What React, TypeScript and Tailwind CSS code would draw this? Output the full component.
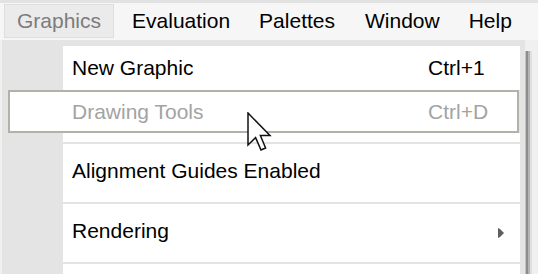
import React from "react";

const MenuBarItem: React.FC<{ label: string; className?: string }> = ({ label, className = "" }) => (
  <div className={`h-[34px] flex items-center text-black ${className}`}>{label}</div>
);

const Separator: React.FC = () => <div className="ml-[61px] w-[457px] h-[2px] bg-[#e3e3e3]" />;

const Cursor: React.FC = () => (
  <svg
    className="absolute left-[247px] top-[112px]"
    width="26"
    height="40"
    viewBox="0 0 13 20"
  >
    <path
      d="M0.5 0.5 L0.5 16.5 L4.3 12.8 L7 19 L9.3 18 L6.7 11.8 L11.5 11.8 Z"
      fill="#ffffff"
      stroke="#111111"
      strokeWidth="0.75"
      strokeLinejoin="miter"
    />
  </svg>
);

const App: React.FC = () => {
  return (
    <div className="relative w-[538px] h-[274px] overflow-hidden bg-[#f0f0f0] font-['Liberation_Sans',Arial,sans-serif] text-[21px] leading-[24px]">
      {/* Top strip */}
      <div className="h-[3px] bg-[#e2e2e2]" />

      {/* Menu bar */}
      <div className="h-[37px] bg-[#f6f6f6] flex items-start">
        <MenuBarItem
          label="Graphics"
          className="ml-[4px] mt-[1px] px-[12px] bg-[#ebebeb] border border-[#dedede] !text-[#7c7c7c]"
        />
        <MenuBarItem label="Evaluation" className="ml-[18px] mt-[1px]" />
        <MenuBarItem label="Palettes" className="ml-[29px] mt-[1px]" />
        <MenuBarItem label="Window" className="ml-[30px] mt-[1px]" />
        <MenuBarItem label="Help" className="ml-[29px] mt-[1px]" />
      </div>

      {/* Dropdown */}
      <div className="flex ml-[2px]">
        <div className="w-[523px] h-[234px] bg-[#e4e4e4] pt-[6px] pr-[5px] flex flex-col">
          {/* New Graphic */}
          <div className="ml-[61px] w-[457px] h-[44px] bg-white flex items-center pl-[9px] pb-[1px] text-black">
            <span className="w-[356px]">New Graphic</span>
            <span>Ctrl+1</span>
          </div>

          {/* Drawing Tools (hovered, disabled) */}
          <div className="ml-[6px] w-[511px] h-[43px] bg-white border-2 border-[#b2b2aa] flex items-center pl-[62px] text-[#a3a3a3]">
            <span className="w-[356px]">Drawing Tools</span>
            <span>Ctrl+D</span>
          </div>

          <div className="ml-[61px] w-[457px] h-[9px] bg-white" />
          <Separator />

          <div className="ml-[61px] w-[457px] h-[58px] bg-white flex items-center pl-[9px] pb-[4px] text-black">
            Alignment Guides Enabled
          </div>
          <Separator />

          <div className="ml-[61px] w-[457px] h-[58px] bg-white flex items-center pl-[9px] pb-[4px] text-black">
            <span className="flex-1">Rendering</span>
            <svg className="mr-[16px] mt-[4px]" width="6" height="10" viewBox="0 0 6 10">
              <polygon points="0,0 2,1 6,5 2,9 0,10" fill="#5f5f5f" />
            </svg>
          </div>
          <Separator />

          <div className="ml-[61px] w-[457px] flex-1 bg-white" />
        </div>

        {/* Drop shadow */}
        <div className="flex pt-[11px]">
          <div className="w-[1px] bg-[#c4c4c4]" />
          <div className="w-[2px] bg-[#8c8c8c]" />
          <div className="w-[2px] bg-[#b4b4b4]" />
          <div className="w-[2px] bg-[#e0e0e0]" />
        </div>
      </div>

      <Cursor />
    </div>
  );
};

export default App;
